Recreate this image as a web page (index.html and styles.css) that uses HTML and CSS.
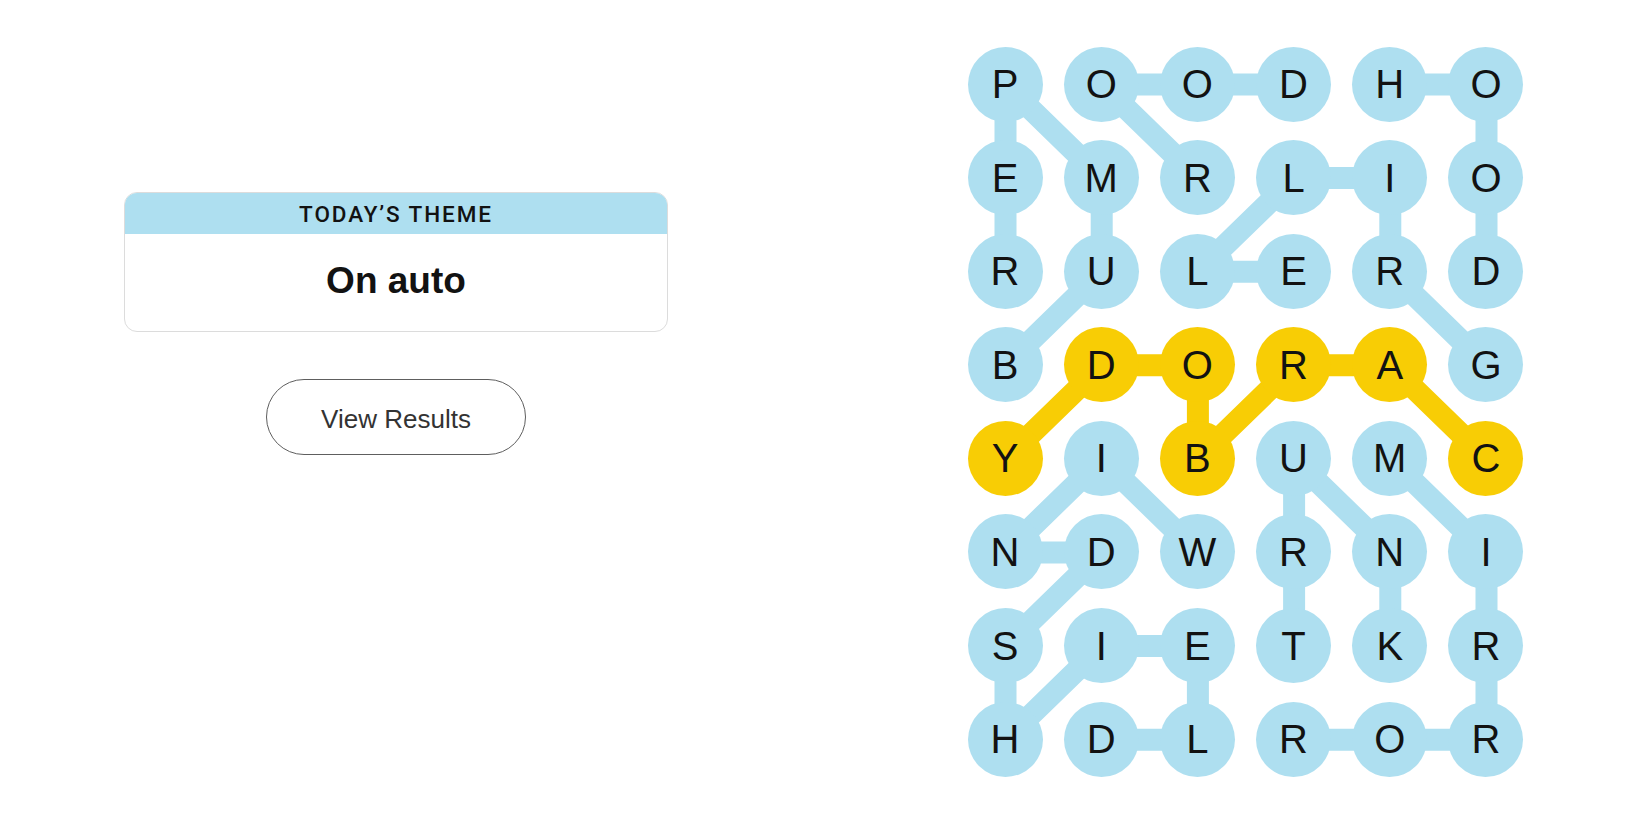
FILE: index.html
```html
<!DOCTYPE html>
<html lang="en">
<head>
<meta charset="utf-8">
<title>Strands</title>
<link rel="stylesheet" href="styles.css">
</head>
<body>
<div class="page">
  <section class="left">
    <div class="theme-card">
      <div class="theme-head">TODAY’S THEME</div>
      <div class="theme-body">On auto</div>
    </div>
    <button class="results-btn">View Results</button>
  </section>
  <section class="board-wrap">
    <div class="board">
      <svg class="links" width="556" height="731" viewBox="0 0 556 731">
        <g stroke="#aedff0" stroke-width="22" stroke-linecap="round">
          <!-- BUMPER -->
          <line x1="37.5" y1="318.3" x2="133.7" y2="224.7"/>
          <line x1="133.7" y1="224.7" x2="133.7" y2="131.1"/>
          <line x1="133.7" y1="131.1" x2="37.5" y2="37.5"/>
          <line x1="37.5" y1="37.5" x2="37.5" y2="131.1"/>
          <line x1="37.5" y1="131.1" x2="37.5" y2="224.7"/>
          <!-- DOOR -->
          <line x1="326.1" y1="37.5" x2="229.9" y2="37.5"/>
          <line x1="229.9" y1="37.5" x2="133.7" y2="37.5"/>
          <line x1="133.7" y1="37.5" x2="229.9" y2="131.1"/>
          <!-- HOOD -->
          <line x1="422.3" y1="37.5" x2="518.5" y2="37.5"/>
          <line x1="518.5" y1="37.5" x2="518.5" y2="131.1"/>
          <line x1="518.5" y1="131.1" x2="518.5" y2="224.7"/>
          <!-- GRILLE -->
          <line x1="518.5" y1="318.3" x2="422.3" y2="224.7"/>
          <line x1="422.3" y1="224.7" x2="422.3" y2="131.1"/>
          <line x1="422.3" y1="131.1" x2="326.1" y2="131.1"/>
          <line x1="326.1" y1="131.1" x2="229.9" y2="224.7"/>
          <line x1="229.9" y1="224.7" x2="326.1" y2="224.7"/>
          <!-- WINDSHIELD -->
          <line x1="229.9" y1="505.5" x2="133.7" y2="411.9"/>
          <line x1="133.7" y1="411.9" x2="37.5" y2="505.5"/>
          <line x1="37.5" y1="505.5" x2="133.7" y2="505.5"/>
          <line x1="133.7" y1="505.5" x2="37.5" y2="599.1"/>
          <line x1="37.5" y1="599.1" x2="37.5" y2="692.7"/>
          <line x1="37.5" y1="692.7" x2="133.7" y2="599.1"/>
          <line x1="133.7" y1="599.1" x2="229.9" y2="599.1"/>
          <line x1="229.9" y1="599.1" x2="229.9" y2="692.7"/>
          <line x1="229.9" y1="692.7" x2="133.7" y2="692.7"/>
          <!-- TRUNK -->
          <line x1="326.1" y1="599.1" x2="326.1" y2="505.5"/>
          <line x1="326.1" y1="505.5" x2="326.1" y2="411.9"/>
          <line x1="326.1" y1="411.9" x2="422.3" y2="505.5"/>
          <line x1="422.3" y1="505.5" x2="422.3" y2="599.1"/>
          <!-- MIRROR -->
          <line x1="422.3" y1="411.9" x2="518.5" y2="505.5"/>
          <line x1="518.5" y1="505.5" x2="518.5" y2="599.1"/>
          <line x1="518.5" y1="599.1" x2="518.5" y2="692.7"/>
          <line x1="518.5" y1="692.7" x2="422.3" y2="692.7"/>
          <line x1="422.3" y1="692.7" x2="326.1" y2="692.7"/>
        </g>
        <g stroke="#f8cd05" stroke-width="22" stroke-linecap="round">
          <!-- CARBODY -->
          <line x1="518.5" y1="411.9" x2="422.3" y2="318.3"/>
          <line x1="422.3" y1="318.3" x2="326.1" y2="318.3"/>
          <line x1="326.1" y1="318.3" x2="229.9" y2="411.9"/>
          <line x1="229.9" y1="411.9" x2="229.9" y2="318.3"/>
          <line x1="229.9" y1="318.3" x2="133.7" y2="318.3"/>
          <line x1="133.7" y1="318.3" x2="37.5" y2="411.9"/>
        </g>
      </svg>
      <div class="grid">
        <div class="cell">P</div><div class="cell">O</div><div class="cell">O</div><div class="cell">D</div><div class="cell">H</div><div class="cell">O</div>
        <div class="cell">E</div><div class="cell">M</div><div class="cell">R</div><div class="cell">L</div><div class="cell">I</div><div class="cell">O</div>
        <div class="cell">R</div><div class="cell">U</div><div class="cell">L</div><div class="cell">E</div><div class="cell">R</div><div class="cell">D</div>
        <div class="cell">B</div><div class="cell found">D</div><div class="cell found">O</div><div class="cell found">R</div><div class="cell found">A</div><div class="cell">G</div>
        <div class="cell found">Y</div><div class="cell">I</div><div class="cell found">B</div><div class="cell">U</div><div class="cell">M</div><div class="cell found">C</div>
        <div class="cell">N</div><div class="cell">D</div><div class="cell">W</div><div class="cell">R</div><div class="cell">N</div><div class="cell">I</div>
        <div class="cell">S</div><div class="cell">I</div><div class="cell">E</div><div class="cell">T</div><div class="cell">K</div><div class="cell">R</div>
        <div class="cell">H</div><div class="cell">D</div><div class="cell">L</div><div class="cell">R</div><div class="cell">O</div><div class="cell">R</div>
      </div>
    </div>
  </section>
</div>
</body>
</html>
```
FILE: styles.css
```css
html, body {
  margin: 0;
  padding: 0;
  background: #ffffff;
}

body {
  font-family: "Liberation Sans", Arial, sans-serif;
  color: #121212;
}

.page {
  display: flex;
  align-items: flex-start;
  width: 1650px;
  height: 825px;
}

.left {
  flex: none;
  width: 792px;
  padding-top: 192px;
  display: flex;
  flex-direction: column;
  align-items: center;
}

.theme-card {
  box-sizing: border-box;
  width: 544px;
  height: 140px;
  border: 1px solid #dcdcdc;
  border-radius: 13px;
  overflow: hidden;
  display: flex;
  flex-direction: column;
  background: #fff;
}

.theme-head {
  height: 40px;
  flex: none;
  background: #aedff0;
  display: flex;
  align-items: center;
  justify-content: center;
  padding-top: 1px;
  font-family: "Roboto", "Liberation Sans", sans-serif;
  font-weight: 500;
  font-size: 22.5px;
  letter-spacing: 1.9px;
  color: #121212;
}

.theme-body {
  flex: 1;
  display: flex;
  align-items: center;
  justify-content: center;
  padding-bottom: 4px;
  font-weight: 700;
  font-size: 37px;
  color: #121212;
}

.results-btn {
  margin-top: 47px;
  box-sizing: border-box;
  width: 260px;
  height: 76px;
  border: 1.5px solid #5e5e5e;
  border-radius: 38px;
  background: #fff;
  font-family: "Liberation Sans", Arial, sans-serif;
  font-size: 26px;
  color: #333;
  padding: 4px 0 0 0;
}

.board-wrap {
  flex: none;
  padding-left: 175.5px;
  padding-top: 46.5px;
}

.board {
  position: relative;
  width: 556px;
  height: 731px;
}

.links {
  position: absolute;
  left: 0;
  top: 0;
}

.grid {
  position: relative;
  display: grid;
  grid-template-columns: repeat(6, 75px);
  grid-template-rows: repeat(8, 75px);
  column-gap: 21.2px;
  row-gap: 18.6px;
}

.cell {
  width: 75px;
  height: 75px;
  border-radius: 50%;
  background: #aedff0;
  display: flex;
  align-items: center;
  justify-content: center;
  font-size: 40px;
  line-height: 1;
  color: #121212;
}

.cell.found {
  background: #f8cd05;
}
```
